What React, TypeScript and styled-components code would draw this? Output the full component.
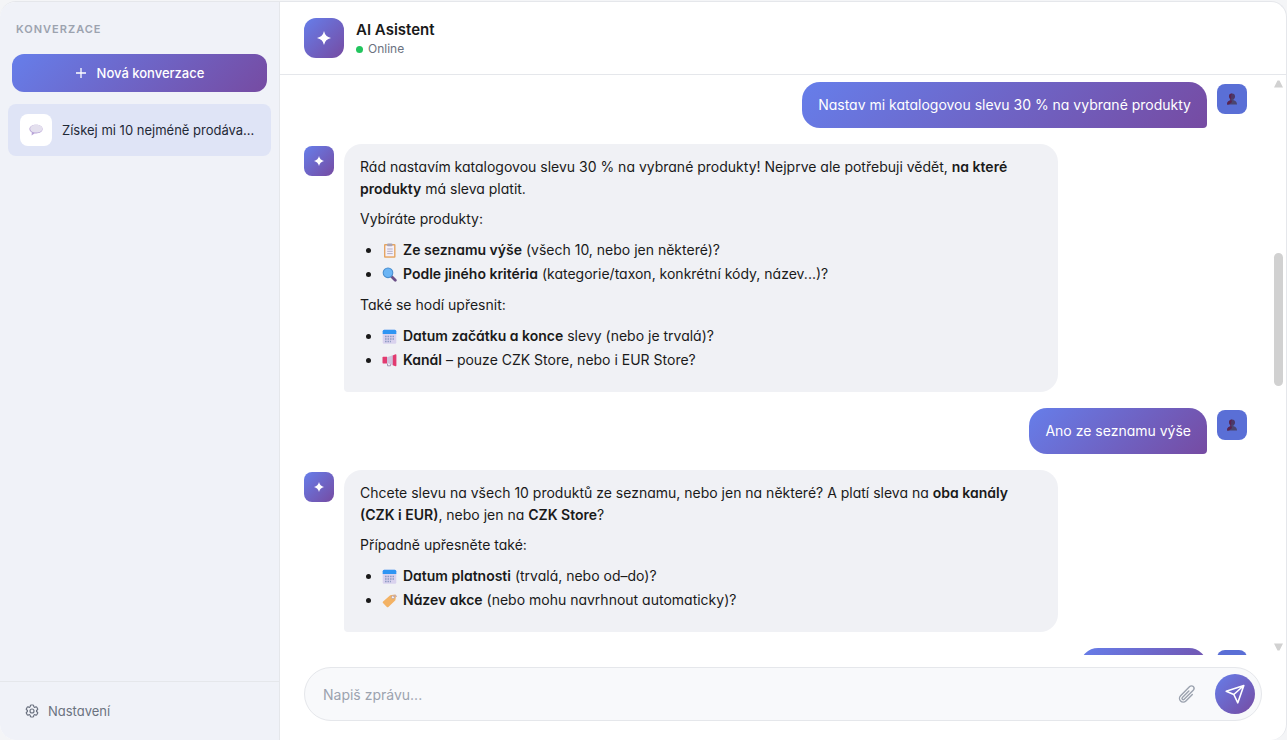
import React from "react";
import styled, { createGlobalStyle, css } from "styled-components";

const GlobalStyle = createGlobalStyle`
  *, *::before, *::after { box-sizing: border-box; }
  html, body { margin: 0; padding: 0; background: #f4f5f7; }
  body {
    font-family: Inter, "Liberation Sans", sans-serif;
    font-size: 14px;
    color: #1a1a2e;
  }
  button, input { font-family: inherit; }
`;

const brand = "linear-gradient(135deg, #667eea 0%, #764ba2 100%)";
const line = "#e5e7eb";

const Page = styled.div`
  display: flex;
  height: 100vh;
  padding-top: 1px;
`;

const Frame = styled.div`
  display: flex;
  flex: 1;
  min-width: 0;
  border: solid ${line};
  border-width: 1px 1px 0 0;
  border-radius: 16px;
  overflow: hidden;
  background: #ffffff;
`;

const Sidebar = styled.aside`
  display: flex;
  flex-direction: column;
  flex: 0 0 280px;
  min-width: 0;
  background: #f0f2f8;
  border-right: 1px solid ${line};
`;

const SidebarTitle = styled.h2`
  margin: 0;
  padding: 19px 16px 17px;
  font-size: 11px;
  line-height: 16px;
  font-weight: 600;
  letter-spacing: 1px;
  color: #9ca3af;
`;

const NewButton = styled.button`
  display: flex;
  align-items: center;
  justify-content: center;
  gap: 10px;
  height: 38px;
  margin: 0 12px 12px;
  border: 0;
  border-radius: 12px;
  background: ${brand};
  color: #ffffff;
  font-size: 13px;
  font-weight: 500;
`;

const ConversationList = styled.nav`
  flex: 1;
  padding: 0 8px;
`;

const Conversation = styled.button`
  display: flex;
  align-items: center;
  gap: 10px;
  width: 100%;
  padding: 10px 12px;
  border: 0;
  border-radius: 8px;
  background: #dfe4f6;
  color: #1f2937;
  font-size: 13px;
  text-align: left;
`;

const ConversationIcon = styled.span`
  display: flex;
  align-items: center;
  justify-content: center;
  flex: 0 0 32px;
  height: 32px;
  border-radius: 8px;
  background: #ffffff;
`;

const ConversationName = styled.span`
  overflow: hidden;
  text-overflow: ellipsis;
  white-space: nowrap;
`;

const SidebarFooter = styled.footer`
  padding: 12px;
  border-top: 1px solid ${line};
`;

const SettingsLink = styled.a`
  display: flex;
  align-items: center;
  gap: 8px;
  height: 34px;
  padding: 0 12px;
  color: #6b7280;
  font-size: 13px;
  text-decoration: none;
  font-feature-settings: "cv11";
`;

const Chat = styled.main`
  display: flex;
  flex-direction: column;
  flex: 1;
  min-width: 0;
  font-feature-settings: "cv11";
`;

const ChatHeader = styled.header`
  display: flex;
  align-items: center;
  gap: 12px;
  padding: 16px 24px;
  border-bottom: 1px solid ${line};
`;

const Avatar = styled.span<{ $large?: boolean; $user?: boolean }>`
  display: flex;
  align-items: center;
  justify-content: center;
  flex: none;
  width: ${(p) => (p.$large ? 40 : 30)}px;
  height: ${(p) => (p.$large ? 40 : 30)}px;
  border-radius: ${(p) => (p.$large ? 12 : 8)}px;
  background: ${(p) => (p.$user ? "#5a6fd6" : brand)};
`;

const AssistantName = styled.h1`
  margin: 0;
  font-size: 15px;
  line-height: 22px;
  font-weight: 600;
  color: #1a1a1a;
`;

const Status = styled.p`
  display: flex;
  align-items: center;
  gap: 5px;
  margin: 0;
  font-size: 12px;
  line-height: 16px;
  color: #6b7280;
  &::before {
    content: "";
    width: 7px;
    height: 7px;
    border-radius: 50%;
    background: #22c55e;
  }
`;

const ChatBody = styled.div`
  display: flex;
  flex: 1;
  min-height: 0;
`;

const Messages = styled.div`
  display: flex;
  flex-direction: column;
  flex: 1;
  gap: 16px;
  min-width: 0;
  padding: 7px 23px 0 24px;
  overflow: hidden;
`;

const Message = styled.article<{ $user?: boolean }>`
  display: flex;
  flex: none;
  flex-direction: ${(p) => (p.$user ? "row-reverse" : "row")};
  align-items: flex-start;
  gap: 10px;
  ${Avatar} { margin-top: 2px; }
`;

const userBubble = css`
  border-radius: 18px 18px 4px 18px;
  background: ${brand};
  color: #ffffff;
`;

const assistantBubble = css`
  border-radius: 18px 18px 18px 4px;
  background: #f0f1f5;
  color: #1a1a1a;
`;

const Bubble = styled.div<{ $user?: boolean }>`
  min-width: 127px;
  min-height: 46px;
  max-width: calc(80% - 40px);
  padding: 12px 16px;
  font-size: 14px;
  line-height: 22px;
  ${(p) => (p.$user ? userBubble : assistantBubble)}
  p { margin: 0 0 8px; }
  p:only-child { margin: 0; }
  ul { margin: 0 0 8px; padding-left: 22px; }
  li { line-height: 24px; }
  strong { font-weight: 600; }
`;

const Scrollbar = styled.div`
  display: flex;
  flex-direction: column;
  align-items: center;
  flex: 0 0 16px;
  padding: 5px 0 4px;
`;

const Thumb = styled.div`
  width: 9px;
  height: 133px;
  margin: 165px 0 auto;
  border-radius: 5px;
  background: #d1d1d1;
`;

const Composer = styled.form`
  display: flex;
  align-items: center;
  height: 54px;
  margin: 12px 24px 19px;
  padding: 0 6px 0 18px;
  border: 1px solid ${line};
  border-radius: 27px;
  background: #f8f9fb;
`;

const MessageInput = styled.input`
  flex: 1;
  min-width: 0;
  padding: 0;
  border: 0;
  outline: 0;
  background: transparent;
  font-size: 14px;
  color: #1a1a1a;
  &::placeholder { color: #9ca3af; }
`;

const IconButton = styled.button<{ $primary?: boolean }>`
  display: flex;
  align-items: center;
  justify-content: center;
  width: 40px;
  height: 40px;
  padding: 0;
  border: 0;
  border-radius: 50%;
  background: ${(p) => (p.$primary ? brand : "transparent")};
  color: ${(p) => (p.$primary ? "#ffffff" : "#9ca3af")};
  margin-left: ${(p) => (p.$primary ? 8 : 0)}px;
`;

const EmojiSvg = styled.svg`
  width: 15px;
  height: 15px;
  margin: 0 6px 0 0;
  vertical-align: -3px;
`;

const Spark = ({ size }: { size: number }) => (
  <svg width={size} height={size} viewBox="0 0 14 14" fill="#fff" aria-hidden>
    <path d="M7 0 Q8.2 5.8 14 7 Q8.2 8.2 7 14 Q5.8 8.2 0 7 Q5.8 5.8 7 0Z" />
  </svg>
);

const Clipboard = () => (
  <EmojiSvg viewBox="0 0 15 15" aria-hidden>
    <rect x="2" y="1" width="11.5" height="13.8" rx="1" fill="#e5a562" />
    <rect x="3.4" y="2.5" width="8.7" height="10.8" fill="#f4f0fa" />
    <rect x="5" y="0.5" width="5.5" height="2.8" rx="1" fill="#a9a4b4" />
    <path d="M5.2 6h5.5M5.2 8.3h5.5M5.2 10.6h5.5" stroke="#b3adc4" strokeWidth="1" />
  </EmojiSvg>
);

const Magnifier = () => (
  <EmojiSvg viewBox="0 0 15 15" aria-hidden>
    <path d="M9.5 9.5l3.8 3.8" stroke="#6b4f86" strokeWidth="2.8" strokeLinecap="round" />
    <circle cx="6" cy="5.8" r="4.8" fill="#6bb5f5" stroke="#4a8fd0" strokeWidth="1.1" />
  </EmojiSvg>
);

const Calendar = () => (
  <EmojiSvg viewBox="0 0 15 15" aria-hidden>
    <rect x="0.7" y="0.8" width="13.6" height="14" rx="1.5" fill="#d9d2ee" />
    <path d="M0.7 5V2.3Q0.7 0.8 2.2 0.8h10.6Q14.3 0.8 14.3 2.3V5z" fill="#2f95f3" />
    <path d="M3 7.4h9M3 9.9h9M3 12.4h6" stroke="#8f9bc4" strokeWidth="1.5" strokeDasharray="1.6 0.9" />
  </EmojiSvg>
);

const Megaphone = () => (
  <EmojiSvg viewBox="0 0 15 15" aria-hidden>
    <path d="M5 4.2L11.5 2v10.5L5 9.8z" fill="#cfc3dc" />
    <path d="M0.5 4.5Q0.5 3.8 1.2 3.8H5v6.7H1.2Q0.5 10.5 0.5 9.8z" fill="#e23b70" />
    <path d="M10.8 2.4L13.5 1.2Q14.4 1 14.4 2v10.5Q14.4 13.5 13.5 13.3L10.8 12.2z" fill="#e23b70" />
    <path d="M5.5 10.5v2.3h3v-1.5" fill="none" stroke="#a596b4" strokeWidth="1" />
  </EmojiSvg>
);

const Tag = () => (
  <EmojiSvg viewBox="0 0 15 15" aria-hidden>
    <path d="M8.2 2.2L13 1.5Q14.2 1.6 14 3l-.6 4.3-7 6.6Q5.5 14.6 4.6 13.7L1 10.1Q.2 9.2 1.1 8.4z" fill="#f3b264" />
    <circle cx="11" cy="4.2" r="1.6" fill="#f4f0f4" stroke="#b49a90" strokeWidth="0.7" />
    <path d="M11 4Q14.5 0.5 14.6 4" fill="none" stroke="#b7a7c4" strokeWidth="0.8" />
  </EmojiSvg>
);

const Person = () => (
  <svg width="12" height="12" viewBox="0 0 12 12" aria-hidden>
    <circle cx="6" cy="3.5" r="3" fill="#4b3868" />
    <path d="M1 11.5Q1 8 4.5 7.3L4.5 5.5h3L7.5 7.3Q11 8 11 11.5z" fill="#4a4570" />
    <path d="M3 3Q3.3 0.6 6 0.6 4.5 3 5.2 6.6L6 9 3 11.5H1Q1 7.8 4.4 7.4 4.6 6.4 3 3z" fill="#5b2350" />
  </svg>
);

const SpeechBubble = () => (
  <svg width="14" height="12" viewBox="0 0 14 12" aria-hidden>
    <path d="M7 .7C3 .7.4 2.6.4 5.1c0 1.4.9 2.6 2.4 3.4L2.6 11.4 5.5 9.4c5 .6 8.1-1.6 8.1-4.3S11 .7 7 .7z" fill="#b9a5d8" />
    <path d="M7.2.8C3.6.8 1.2 2.4 1.2 4.7S3.6 8.5 7.2 8.5 13.4 7 13.4 4.7 10.8.8 7.2.8z" fill="#e4e0ee" />
  </svg>
);

const Plus = () => (
  <svg width="12" height="12" viewBox="0 0 12 12" stroke="#fff" strokeWidth="1.3" aria-hidden>
    <path d="M6 1v10M1 6h10" />
  </svg>
);

const Gear = () => (
  <svg width="16" height="16" viewBox="0 0 24 24" fill="none" stroke="currentColor" strokeWidth="1.8" strokeLinecap="round" strokeLinejoin="round" aria-hidden>
    <path d="M9.594 3.94c.09-.542.56-.94 1.11-.94h2.593c.55 0 1.02.398 1.11.94l.213 1.281c.063.374.313.686.645.87.074.04.147.083.22.127.325.196.72.257 1.075.124l1.217-.456a1.125 1.125 0 0 1 1.37.49l1.296 2.247a1.125 1.125 0 0 1-.26 1.431l-1.003.827c-.293.241-.438.613-.43.992a7.723 7.723 0 0 1 0 .255c-.008.378.137.75.43.991l1.004.827c.424.35.534.955.26 1.43l-1.298 2.247a1.125 1.125 0 0 1-1.369.491l-1.217-.456c-.355-.133-.75-.072-1.076.124a6.47 6.47 0 0 1-.22.128c-.331.183-.581.495-.644.869l-.213 1.281c-.09.543-.56.94-1.11.94h-2.594c-.55 0-1.019-.398-1.11-.94l-.213-1.281c-.062-.374-.312-.686-.644-.87a6.52 6.52 0 0 1-.22-.127c-.325-.196-.72-.257-1.076-.124l-1.217.456a1.125 1.125 0 0 1-1.369-.49l-1.297-2.247a1.125 1.125 0 0 1 .26-1.431l1.004-.827c.292-.24.437-.613.43-.991a6.932 6.932 0 0 1 0-.255c.007-.38-.138-.751-.43-.992l-1.004-.827a1.125 1.125 0 0 1-.26-1.43l1.297-2.247a1.125 1.125 0 0 1 1.37-.491l1.216.456c.356.133.751.072 1.076-.124.072-.044.146-.086.22-.128.332-.183.582-.495.644-.869l.214-1.28Z" />
    <circle cx="12" cy="12" r="3" />
  </svg>
);

const Clip = () => (
  <svg width="20" height="20" viewBox="0 0 24 24" fill="none" stroke="currentColor" strokeWidth="1.7" strokeLinecap="round" strokeLinejoin="round" aria-hidden>
    <path d="m18.375 12.739-7.693 7.693a4.5 4.5 0 0 1-6.364-6.364l10.94-10.94A3 3 0 1 1 19.5 7.372L8.552 18.32m.009-.01-.01.01m5.699-9.941-7.81 7.81a1.5 1.5 0 0 0 2.112 2.13" />
  </svg>
);

const Send = () => (
  <svg width="20" height="20" viewBox="0 0 20 20" fill="none" stroke="currentColor" strokeWidth="1.6" strokeLinejoin="round" aria-hidden>
    <path d="M18.8 1.5L1.2 7.2l7.6 3.3L12.8 18.8zM18.8 1.5L8.8 10.5" />
  </svg>
);

const Arrow = ({ down }: { down?: boolean }) => (
  <svg width="9" height="8" viewBox="0 0 9 8" fill="#d1d1d1" aria-hidden>
    <path d={down ? "M0 .5h9L5.5 7.5h-2z" : "M0 7.5h9L5.5.5h-2z"} />
  </svg>
);

const AssistantMessage = ({ children }: { children: React.ReactNode }) => (
  <Message>
    <Avatar><Spark size={10} /></Avatar>
    <Bubble>{children}</Bubble>
  </Message>
);

const UserMessage = ({ children }: { children?: React.ReactNode }) => (
  <Message $user>
    <Avatar $user><Person /></Avatar>
    <Bubble $user>{children && <p>{children}</p>}</Bubble>
  </Message>
);

export default function App() {
  return (
    <Page>
      <GlobalStyle />
      <Frame>
        <Sidebar>
          <SidebarTitle>KONVERZACE</SidebarTitle>
          <NewButton type="button"><Plus />Nová konverzace</NewButton>
          <ConversationList>
            <Conversation type="button">
              <ConversationIcon><SpeechBubble /></ConversationIcon>
              <ConversationName>Získej mi 10 nejméně prodáva...</ConversationName>
            </Conversation>
          </ConversationList>
          <SidebarFooter>
            <SettingsLink href="#nastaveni"><Gear />Nastavení</SettingsLink>
          </SidebarFooter>
        </Sidebar>
        <Chat>
          <ChatHeader>
            <Avatar $large><Spark size={14} /></Avatar>
            <div>
              <AssistantName>AI Asistent</AssistantName>
              <Status>Online</Status>
            </div>
          </ChatHeader>
          <ChatBody>
            <Messages>
              <UserMessage>Nastav mi katalogovou slevu 30 % na vybrané produkty</UserMessage>
              <AssistantMessage>
                <p>Rád nastavím katalogovou slevu 30 % na vybrané produkty! Nejprve ale potřebuji vědět, <strong>na které produkty</strong> má sleva platit.</p>
                <p>Vybíráte produkty:</p>
                <ul>
                  <li><Clipboard /><strong>Ze seznamu výše</strong> (všech 10, nebo jen některé)?</li>
                  <li><Magnifier /><strong>Podle jiného kritéria</strong> (kategorie/taxon, konkrétní kódy, název...)?</li>
                </ul>
                <p>Také se hodí upřesnit:</p>
                <ul>
                  <li><Calendar /><strong>Datum začátku a konce</strong> slevy (nebo je trvalá)?</li>
                  <li><Megaphone /><strong>Kanál</strong> – pouze CZK Store, nebo i EUR Store?</li>
                </ul>
              </AssistantMessage>
              <UserMessage>Ano ze seznamu výše</UserMessage>
              <AssistantMessage>
                <p>Chcete slevu na všech 10 produktů ze seznamu, nebo jen na některé? A platí sleva na <strong>oba kanály (CZK i EUR)</strong>, nebo jen na <strong>CZK Store</strong>?</p>
                <p>Případně upřesněte také:</p>
                <ul>
                  <li><Calendar /><strong>Datum platnosti</strong> (trvalá, nebo od–do)?</li>
                  <li><Tag /><strong>Název akce</strong> (nebo mohu navrhnout automaticky)?</li>
                </ul>
              </AssistantMessage>
              <UserMessage />
            </Messages>
            <Scrollbar aria-hidden>
              <Arrow />
              <Thumb />
              <Arrow down />
            </Scrollbar>
          </ChatBody>
          <Composer>
            <MessageInput type="text" aria-label="Napiš zprávu" placeholder="Napiš zprávu..." />
            <IconButton type="button" aria-label="Přiložit soubor"><Clip /></IconButton>
            <IconButton $primary type="submit" aria-label="Odeslat"><Send /></IconButton>
          </Composer>
        </Chat>
      </Frame>
    </Page>
  );
}
